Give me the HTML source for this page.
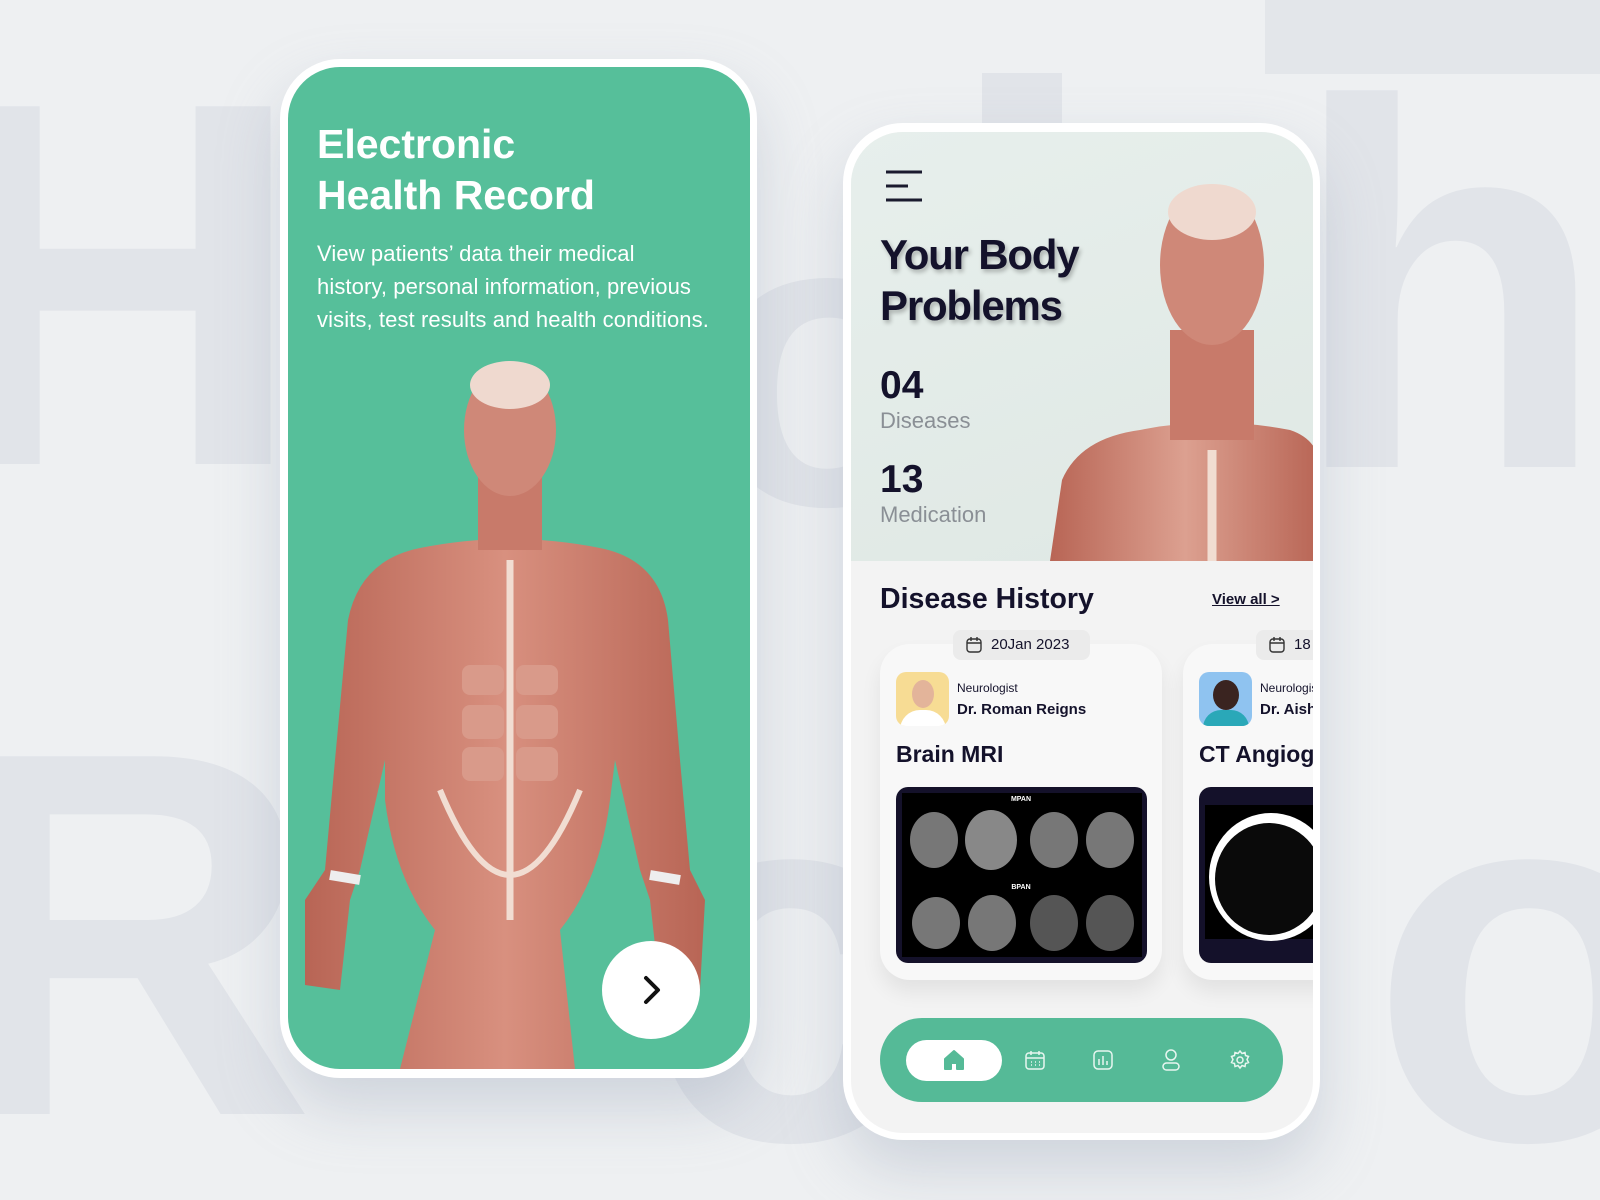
<!DOCTYPE html>
<html><head><meta charset="utf-8"><style>
*{margin:0;padding:0;box-sizing:border-box}
html,body{width:1600px;height:1200px;overflow:hidden}
body{background:#eef0f2;position:relative;font-family:"Liberation Sans",sans-serif}
.bgwrap{position:absolute;left:0;top:0;width:1600px;height:1200px;overflow:hidden}
.bg{position:absolute;color:#e1e4e9;font-weight:700;line-height:1}
.abs{position:absolute}
.phone{position:absolute;background:#fff;border-radius:60px;box-shadow:0 30px 60px rgba(150,160,180,.35)}
.inner{position:absolute;overflow:hidden;border-radius:52px}
</style></head><body>
<div class="bgwrap">
<div class="abs" style="left:1265px;top:0;width:335px;height:74px;background:#e3e6ea"></div>
<div class="abs" style="left:982px;top:73px;width:80px;height:120px;background:#e1e4e9"></div>
<div class="bg" style="left:-70px;top:25px;font-size:520px">H</div>
<div class="bg" style="left:1290px;top:28px;font-size:520px">h</div>
<div class="bg" style="left:-60px;top:675px;font-size:520px">R</div>
<div class="bg" style="left:640px;top:700px;font-size:520px">c</div>
<div class="bg" style="left:1370px;top:700px;font-size:520px">o</div>
<div class="bg" style="left:700px;top:150px;font-size:420px">o</div>
</div>

<!-- Left phone -->
<div class="phone" style="left:280px;top:59px;width:477px;height:1019px"></div>
<div class="inner" style="left:288px;top:67px;width:462px;height:1002px;background:#56bf9a">
 <svg width="462" height="1002" viewBox="288 67 462 1002" style="position:absolute;left:0;top:0">
  <defs><linearGradient id="m" x1="0" x2="1"><stop offset="0" stop-color="#b86555"/><stop offset=".5" stop-color="#d8907f"/><stop offset="1" stop-color="#b86555"/></linearGradient></defs>
  <path fill="url(#m)" d="M420 548 Q510 530 600 548 Q660 560 668 620 L680 760 L690 870 L705 900 L700 990 L660 990 L650 900 L640 870 L615 760 L610 800 Q600 880 560 930 L575 1069 L400 1069 L435 930 Q395 880 385 800 L385 760 L360 870 L350 900 L340 990 L305 985 L305 900 L325 870 L335 760 L348 620 Q360 560 420 548 Z"/>
  <rect x="478" y="470" width="64" height="80" fill="#c87a6a"/>
  <ellipse cx="510" cy="430" rx="46" ry="66" fill="#cf8878"/>
  <ellipse cx="510" cy="385" rx="40" ry="24" fill="#efd9cf"/>
  <path d="M510 560 L510 920" stroke="#f1ddd2" stroke-width="7"/>
  <path d="M440 790 Q510 960 580 790" stroke="#f1ddd2" stroke-width="6" fill="none"/>
  <g fill="#d99a8a"><rect x="462" y="665" width="42" height="30" rx="8"/><rect x="516" y="665" width="42" height="30" rx="8"/><rect x="462" y="705" width="42" height="34" rx="8"/><rect x="516" y="705" width="42" height="34" rx="8"/><rect x="462" y="747" width="42" height="34" rx="8"/><rect x="516" y="747" width="42" height="34" rx="8"/></g>
  <path d="M330 875 L360 880 M650 875 L680 880" stroke="#eee" stroke-width="10"/>
 </svg>
 <div class="abs" style="left:29px;top:52px;color:#fff;font-weight:700;font-size:41px;line-height:51px">Electronic<br>Health Record</div>
 <div class="abs" style="left:29px;top:170px;color:#fff;font-size:22px;line-height:33px;white-space:nowrap;letter-spacing:0.1px">View patients’ data their medical<br>history, personal information, previous<br>visits, test results and health conditions.</div>
 <div class="abs" style="left:314px;top:874px;width:98px;height:98px;border-radius:50%;background:#fff"><svg width="98" height="98"><path d="M44 37 L56 49 L44 61" stroke="#111" stroke-width="4" fill="none" stroke-linecap="round" stroke-linejoin="round"/></svg></div>
</div>

<!-- Right phone -->
<div class="phone" style="left:843px;top:123px;width:477px;height:1017px"></div>
<div class="inner" style="left:851px;top:132px;width:462px;height:1001px;background:#f3f3f3">
 <div class="abs" style="left:0;top:0;width:462px;height:429px;background:linear-gradient(160deg,#e7efec,#dfe8e4)"></div>
 <svg width="462" height="429" viewBox="851 132 462 429" style="position:absolute;left:0;top:0">
  <defs><linearGradient id="m2" x1="0" x2="1"><stop offset="0" stop-color="#b86555"/><stop offset=".5" stop-color="#dca090"/><stop offset="1" stop-color="#b86555"/></linearGradient></defs>
  <path fill="url(#m2)" d="M1140 430 Q1212 415 1290 430 Q1320 440 1320 470 L1320 561 L1050 561 L1062 480 Q1080 438 1140 430 Z"/>
  <rect x="1170" y="330" width="84" height="110" fill="#c87a6a"/>
  <ellipse cx="1212" cy="265" rx="52" ry="80" fill="#cf8878"/>
  <ellipse cx="1212" cy="212" rx="44" ry="28" fill="#efd9cf"/>
  <path d="M1212 450 L1212 561" stroke="#f1ddd2" stroke-width="9"/>
 </svg>
 <svg class="abs" style="left:35px;top:38px" width="38" height="32"><path d="M0 2H36M0 16H22M0 30H36" stroke="#1a1a2e" stroke-width="3"/></svg>
 <div class="abs" style="left:29px;top:97px;color:#14122b;font-weight:900;font-size:42px;line-height:51px;letter-spacing:-1.2px;text-shadow:2px 3px 4px rgba(0,0,0,.25)">Your Body<br>Problems</div>
 <div class="abs" style="left:29px;top:232px;color:#14122b;font-weight:700;font-size:39px">04</div>
 <div class="abs" style="left:29px;top:276px;color:#8a8f95;font-size:22px">Diseases</div>
 <div class="abs" style="left:29px;top:326px;color:#14122b;font-weight:700;font-size:39px">13</div>
 <div class="abs" style="left:29px;top:370px;color:#8a8f95;font-size:22px">Medication</div>
 <div class="abs" style="left:29px;top:451px;color:#14122b;font-weight:700;font-size:28.5px">Disease History</div>
 <div class="abs" style="left:361px;top:459px;color:#14122b;font-weight:700;font-size:15px;text-decoration:underline">View all &gt;</div>
 <!-- card1 -->
 <div class="abs" style="left:29px;top:512px;width:282px;height:336px;background:#f8f8f8;border-radius:30px;box-shadow:0 12px 20px rgba(0,0,0,.07)"></div>
 <div class="abs" style="left:102px;top:498px;width:137px;height:30px;background:#ebebeb;border-radius:8px;font-size:15px;color:#14122b;line-height:30px;padding-left:38px">20Jan 2023</div>
 <svg class="abs" style="left:115px;top:505px" width="16" height="16"><rect x="1" y="2" width="14" height="13" rx="3" fill="none" stroke="#333" stroke-width="1.4"/><path d="M1 6H15M5 0V4M11 0V4" stroke="#333" stroke-width="1.4"/></svg>
 <div class="abs" style="left:45px;top:540px;width:53px;height:54px;border-radius:10px;background:#f7dc94;overflow:hidden"><div style="margin:8px auto 0;width:22px;height:28px;border-radius:50%;background:#e3b49a"></div><div style="margin:2px auto 0;width:46px;height:20px;border-radius:20px 20px 0 0;background:#fff"></div></div>
 <div class="abs" style="left:106px;top:549px;font-size:12px;color:#14122b">Neurologist</div>
 <div class="abs" style="left:106px;top:569px;font-size:15px;font-weight:700;color:#14122b">Dr. Roman Reigns</div>
 <div class="abs" style="left:45px;top:609px;font-size:23px;font-weight:700;color:#14122b">Brain MRI</div>
 <div class="abs" style="left:45px;top:655px;width:251px;height:176px;border-radius:12px;background:#14112a;overflow:hidden">
  <svg width="251" height="176"><rect x="6" y="6" width="240" height="164" fill="#000"/><g fill="#777"><ellipse cx="38" cy="53" rx="24" ry="28"/><ellipse cx="95" cy="53" rx="26" ry="30" fill="#888"/><ellipse cx="158" cy="53" rx="24" ry="28"/><ellipse cx="214" cy="53" rx="24" ry="28"/><ellipse cx="40" cy="136" rx="24" ry="26"/><ellipse cx="96" cy="136" rx="24" ry="28"/><ellipse cx="158" cy="136" rx="24" ry="28" fill="#555"/><ellipse cx="214" cy="136" rx="24" ry="28" fill="#555"/></g><text x="125" y="14" font-size="7" fill="#fff" text-anchor="middle" font-weight="700">MPAN</text><text x="125" y="102" font-size="7" fill="#fff" text-anchor="middle" font-weight="700">BPAN</text></svg></div>
 <!-- card2 -->
 <div class="abs" style="left:332px;top:512px;width:200px;height:336px;background:#f8f8f8;border-radius:30px;box-shadow:0 12px 20px rgba(0,0,0,.07)"></div>
 <div class="abs" style="left:405px;top:498px;width:100px;height:30px;background:#ebebeb;border-radius:8px;font-size:15px;color:#14122b;line-height:30px;padding-left:38px">18</div>
 <svg class="abs" style="left:418px;top:505px" width="16" height="16"><rect x="1" y="2" width="14" height="13" rx="3" fill="none" stroke="#333" stroke-width="1.4"/><path d="M1 6H15M5 0V4M11 0V4" stroke="#333" stroke-width="1.4"/></svg>
 <div class="abs" style="left:348px;top:540px;width:53px;height:54px;border-radius:10px;background:#8fc3f0;overflow:hidden"><div style="margin:8px auto 0;width:26px;height:30px;border-radius:50%;background:#3a2420"></div><div style="margin:0 auto;width:46px;height:18px;border-radius:20px 20px 0 0;background:#2aa8b8"></div></div>
 <div class="abs" style="left:409px;top:549px;font-size:12px;color:#14122b;white-space:nowrap">Neurologist</div>
 <div class="abs" style="left:409px;top:569px;font-size:15px;font-weight:700;color:#14122b;white-space:nowrap">Dr. Aisha</div>
 <div class="abs" style="left:348px;top:609px;font-size:23px;font-weight:700;color:#14122b;white-space:nowrap">CT Angiography</div>
 <div class="abs" style="left:348px;top:655px;width:140px;height:176px;border-radius:12px;background:#14112a;overflow:hidden"><svg width="140" height="176"><rect x="6" y="18" width="134" height="134" fill="#000"/><ellipse cx="72" cy="90" rx="62" ry="64" fill="#fff"/><ellipse cx="70" cy="92" rx="54" ry="56" fill="#0a0a0a"/></svg></div>
 <!-- nav -->
 <div class="abs" style="left:29px;top:886px;width:403px;height:84px;border-radius:42px;background:#55ba97"></div>
 <div class="abs" style="left:55px;top:908px;width:96px;height:41px;border-radius:21px;background:#fff"></div>
 <svg class="abs" style="left:92px;top:917px" width="22" height="22"><path d="M2 10 L11 2 L20 10 V20 H14 V14 H8 V20 H2 Z" fill="#55ba97" stroke="#55ba97" stroke-width="2" stroke-linejoin="round"/></svg>
 <svg class="abs" style="left:174px;top:918px" width="20" height="20" fill="none" stroke="#e8f6f0" stroke-width="1.5"><rect x="1" y="3" width="18" height="16" rx="3"/><path d="M1 8H19M6 1V5M14 1V5"/><path d="M6 12h1M10 12h1M14 12h1M6 15h1M10 15h1M14 15h1"/></svg>
 <svg class="abs" style="left:242px;top:918px" width="20" height="20" fill="none" stroke="#e8f6f0" stroke-width="1.5"><rect x="1" y="1" width="18" height="18" rx="4"/><path d="M6 9V15M10 6V15M14 11V15"/></svg>
 <svg class="abs" style="left:310px;top:917px" width="20" height="22" fill="none" stroke="#e8f6f0" stroke-width="1.5"><circle cx="10" cy="6" r="5"/><rect x="2" y="14" width="16" height="7" rx="3.5"/></svg>
 <svg class="abs" style="left:379px;top:918px" width="20" height="20" fill="none" stroke="#e8f6f0" stroke-width="1.5"><circle cx="10" cy="10" r="3"/><path d="M10 1l2 2.5 3-1 .5 3 3 1-1.5 3 1.5 3-3 1-.5 3-3-1-2 2.5-2-2.5-3 1-.5-3-3-1 1.5-3-1.5-3 3-1 .5-3 3 1z"/></svg>
</div>
</body></html>
